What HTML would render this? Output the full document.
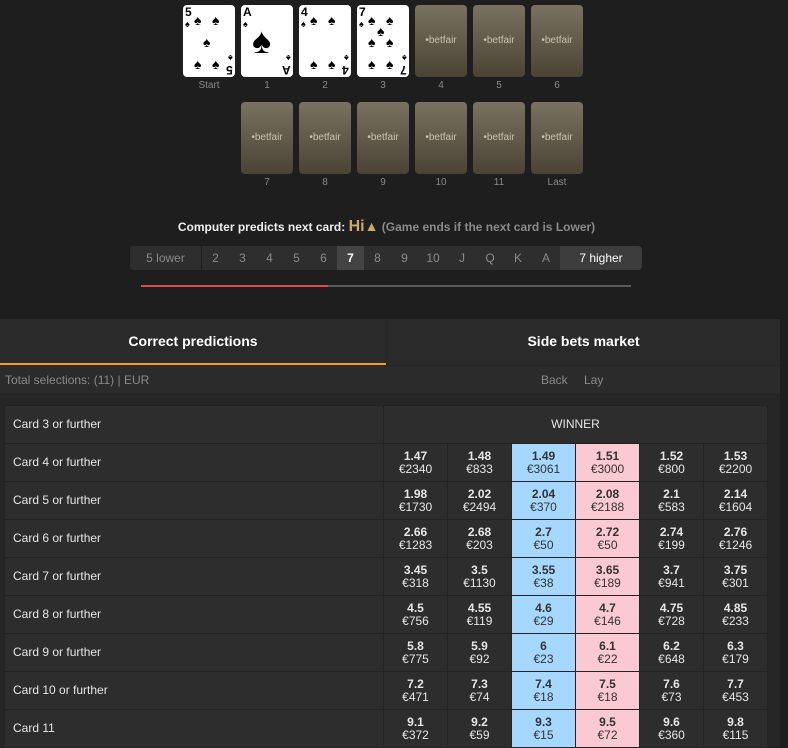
<!DOCTYPE html>
<html><head><meta charset="utf-8"><style>
*{margin:0;padding:0;box-sizing:border-box}
body{width:788px;height:747px;background:#1e1e1e;font-family:"Liberation Sans",sans-serif;position:relative;overflow:hidden}
.c{position:absolute;width:52px;height:72px;border-radius:4px}
.f{background:#fff;color:#000}
.b{background:linear-gradient(#7a7260,#4a4334);}
.b span{position:absolute;top:30px;left:0;width:52px;text-align:center;color:#c8c2b2;font-size:10px;}
.lb{position:absolute;width:52px;text-align:center;color:#8a8a8a;font-size:10px}
.r{position:absolute;font-weight:bold;font-size:12px;line-height:11px}
.p{position:absolute;font-size:14px;line-height:14px}
.sel{position:absolute;top:246px;left:130px;width:512px;height:24px;background:#2e2e2e;border-radius:4px;display:flex;color:#8a8a8a;font-size:12px;line-height:24px}
.sel div{text-align:center}
.panel{position:absolute;left:0;top:319px;width:780px;height:428px;background:#262626}
table{position:absolute;left:4px;top:86px;border-collapse:collapse;background:#2e2d2e;color:#e6e6e6;font-size:12px}
td{height:38px;border:1px solid #232323;text-align:center;line-height:13px}
td.l{text-align:left;padding-left:8px;width:379px}
td.o{width:64px}
td.o b{display:block;font-size:12px}
.bk{background:#a6d8ff;color:#333}.ly{background:#fac9d1;color:#333}
</style></head><body>
<div class="c f" style="left:183px;top:5px"><div class="r" style="left:2px;top:2px">5</div><div class="p" style="left:2px;top:12px;font-size:9px">♠</div>
<div class="p" style="left:11px;top:8px">♠</div><div class="p" style="left:29px;top:8px">♠</div><div class="p" style="left:20px;top:30px">♠</div><div class="p" style="left:11px;top:52px">♠</div><div class="p" style="left:29px;top:52px">♠</div>
<div class="r" style="right:2px;bottom:2px;transform:rotate(180deg)">5</div><div class="p" style="right:2px;bottom:12px;font-size:9px;transform:rotate(180deg)">♠</div></div>
<div class="c f" style="left:241px;top:5px"><div class="r" style="left:2px;top:2px">A</div><div class="p" style="left:2px;top:12px;font-size:9px">♠</div>
<div class="p" style="left:11px;top:18px;font-size:36px;line-height:36px">♠</div>
<div class="r" style="right:2px;bottom:2px;transform:rotate(180deg)">A</div><div class="p" style="right:2px;bottom:12px;font-size:9px;transform:rotate(180deg)">♠</div></div>
<div class="c f" style="left:299px;top:5px"><div class="r" style="left:2px;top:2px">4</div><div class="p" style="left:2px;top:12px;font-size:9px">♠</div>
<div class="p" style="left:11px;top:8px">♠</div><div class="p" style="left:29px;top:8px">♠</div><div class="p" style="left:11px;top:52px">♠</div><div class="p" style="left:29px;top:52px">♠</div>
<div class="r" style="right:2px;bottom:2px;transform:rotate(180deg)">4</div><div class="p" style="right:2px;bottom:12px;font-size:9px;transform:rotate(180deg)">♠</div></div>
<div class="c f" style="left:357px;top:5px"><div class="r" style="left:2px;top:2px">7</div><div class="p" style="left:2px;top:12px;font-size:9px">♠</div>
<div class="p" style="left:11px;top:8px">♠</div><div class="p" style="left:29px;top:8px">♠</div><div class="p" style="left:20px;top:19px">♠</div><div class="p" style="left:11px;top:30px">♠</div><div class="p" style="left:29px;top:30px">♠</div><div class="p" style="left:11px;top:52px">♠</div><div class="p" style="left:29px;top:52px">♠</div>
<div class="r" style="right:2px;bottom:2px;transform:rotate(180deg)">7</div><div class="p" style="right:2px;bottom:12px;font-size:9px;transform:rotate(180deg)">♠</div></div>
<div class="c b" style="left:415px;top:5px"><span>•betfair</span></div>
<div class="c b" style="left:473px;top:5px"><span>•betfair</span></div>
<div class="c b" style="left:531px;top:5px"><span>•betfair</span></div>
<div class="lb" style="left:183px;top:80px">Start</div><div class="lb" style="left:241px;top:80px">1</div><div class="lb" style="left:299px;top:80px">2</div><div class="lb" style="left:357px;top:80px">3</div><div class="lb" style="left:415px;top:80px">4</div><div class="lb" style="left:473px;top:80px">5</div><div class="lb" style="left:531px;top:80px">6</div>
<div class="c b" style="left:241px;top:102px"><span>•betfair</span></div>
<div class="c b" style="left:299px;top:102px"><span>•betfair</span></div>
<div class="c b" style="left:357px;top:102px"><span>•betfair</span></div>
<div class="c b" style="left:415px;top:102px"><span>•betfair</span></div>
<div class="c b" style="left:473px;top:102px"><span>•betfair</span></div>
<div class="c b" style="left:531px;top:102px"><span>•betfair</span></div>
<div class="lb" style="left:241px;top:177px">7</div><div class="lb" style="left:299px;top:177px">8</div><div class="lb" style="left:357px;top:177px">9</div><div class="lb" style="left:415px;top:177px">10</div><div class="lb" style="left:473px;top:177px">11</div><div class="lb" style="left:531px;top:177px">Last</div>

<div style="position:absolute;top:218px;left:0;width:773px;text-align:center;font-size:12px;color:#8a8a8a;line-height:17px"><b style="color:#eee">Computer predicts next card:</b> <b style="color:#c9a96a;font-size:16px">Hi</b><b style="color:#c9a96a;font-size:14px">&#9650;</b> <b>(Game ends if the next card is Lower)</b></div>
<div class="sel">
<div style="width:72px;border-right:1px solid #1e1e1e">5 lower</div>
<div style="width:27px">2</div><div style="width:27px">3</div><div style="width:27px">4</div><div style="width:27px">5</div><div style="width:27px">6</div>
<div style="width:27px;background:#444;color:#fff;font-weight:bold">7</div>
<div style="width:27px">8</div><div style="width:27px">9</div><div style="width:30px">10</div><div style="width:28px">J</div><div style="width:28px">Q</div><div style="width:28px">K</div><div style="width:28px">A</div>
<div style="flex:1;background:#3c3c3c;color:#fff;border-radius:0 4px 4px 0">7 higher</div>
</div>
<div style="position:absolute;top:285px;left:141px;width:490px;height:2px;background:#5a5a5a"></div>
<div style="position:absolute;top:285px;left:141px;width:187px;height:2px;background:#e0474c"></div>

<div class="panel">
<div style="position:absolute;left:0;top:0;width:386px;height:46px;background:#2a2a2a;border-bottom:2px solid #f5a500;color:#fff;font-weight:bold;font-size:14px;text-align:center;line-height:44px">Correct predictions</div>
<div style="position:absolute;left:387px;top:0;width:393px;height:46px;background:#2a2a2a;color:#fff;font-weight:bold;font-size:14px;text-align:center;line-height:44px">Side bets market</div>
<div style="position:absolute;left:0;top:47px;width:780px;height:27px;background:#2b2b2b;color:#8a8a8a;font-size:12px;line-height:28px"><span style="position:absolute;left:5px">Total selections: (11) | EUR</span><span style="position:absolute;left:541px">Back</span><span style="position:absolute;left:584px">Lay</span></div>
<table>
<tr><td class="l">Card 3 or further</td><td colspan="6">WINNER</td></tr>
<tr><td class="l">Card 4 or further</td><td class="o"><b>1.47</b>€2340</td><td class="o"><b>1.48</b>€833</td><td class="o bk"><b>1.49</b>€3061</td><td class="o ly"><b>1.51</b>€3000</td><td class="o"><b>1.52</b>€800</td><td class="o"><b>1.53</b>€2200</td></tr>
<tr><td class="l">Card 5 or further</td><td class="o"><b>1.98</b>€1730</td><td class="o"><b>2.02</b>€2494</td><td class="o bk"><b>2.04</b>€370</td><td class="o ly"><b>2.08</b>€2188</td><td class="o"><b>2.1</b>€583</td><td class="o"><b>2.14</b>€1604</td></tr>
<tr><td class="l">Card 6 or further</td><td class="o"><b>2.66</b>€1283</td><td class="o"><b>2.68</b>€203</td><td class="o bk"><b>2.7</b>€50</td><td class="o ly"><b>2.72</b>€50</td><td class="o"><b>2.74</b>€199</td><td class="o"><b>2.76</b>€1246</td></tr>
<tr><td class="l">Card 7 or further</td><td class="o"><b>3.45</b>€318</td><td class="o"><b>3.5</b>€1130</td><td class="o bk"><b>3.55</b>€38</td><td class="o ly"><b>3.65</b>€189</td><td class="o"><b>3.7</b>€941</td><td class="o"><b>3.75</b>€301</td></tr>
<tr><td class="l">Card 8 or further</td><td class="o"><b>4.5</b>€756</td><td class="o"><b>4.55</b>€119</td><td class="o bk"><b>4.6</b>€29</td><td class="o ly"><b>4.7</b>€146</td><td class="o"><b>4.75</b>€728</td><td class="o"><b>4.85</b>€233</td></tr>
<tr><td class="l">Card 9 or further</td><td class="o"><b>5.8</b>€775</td><td class="o"><b>5.9</b>€92</td><td class="o bk"><b>6</b>€23</td><td class="o ly"><b>6.1</b>€22</td><td class="o"><b>6.2</b>€648</td><td class="o"><b>6.3</b>€179</td></tr>
<tr><td class="l">Card 10 or further</td><td class="o"><b>7.2</b>€471</td><td class="o"><b>7.3</b>€74</td><td class="o bk"><b>7.4</b>€18</td><td class="o ly"><b>7.5</b>€18</td><td class="o"><b>7.6</b>€73</td><td class="o"><b>7.7</b>€453</td></tr>
<tr><td class="l">Card 11</td><td class="o"><b>9.1</b>€372</td><td class="o"><b>9.2</b>€59</td><td class="o bk"><b>9.3</b>€15</td><td class="o ly"><b>9.5</b>€72</td><td class="o"><b>9.6</b>€360</td><td class="o"><b>9.8</b>€115</td></tr>
</table>
</div>
</body></html>
